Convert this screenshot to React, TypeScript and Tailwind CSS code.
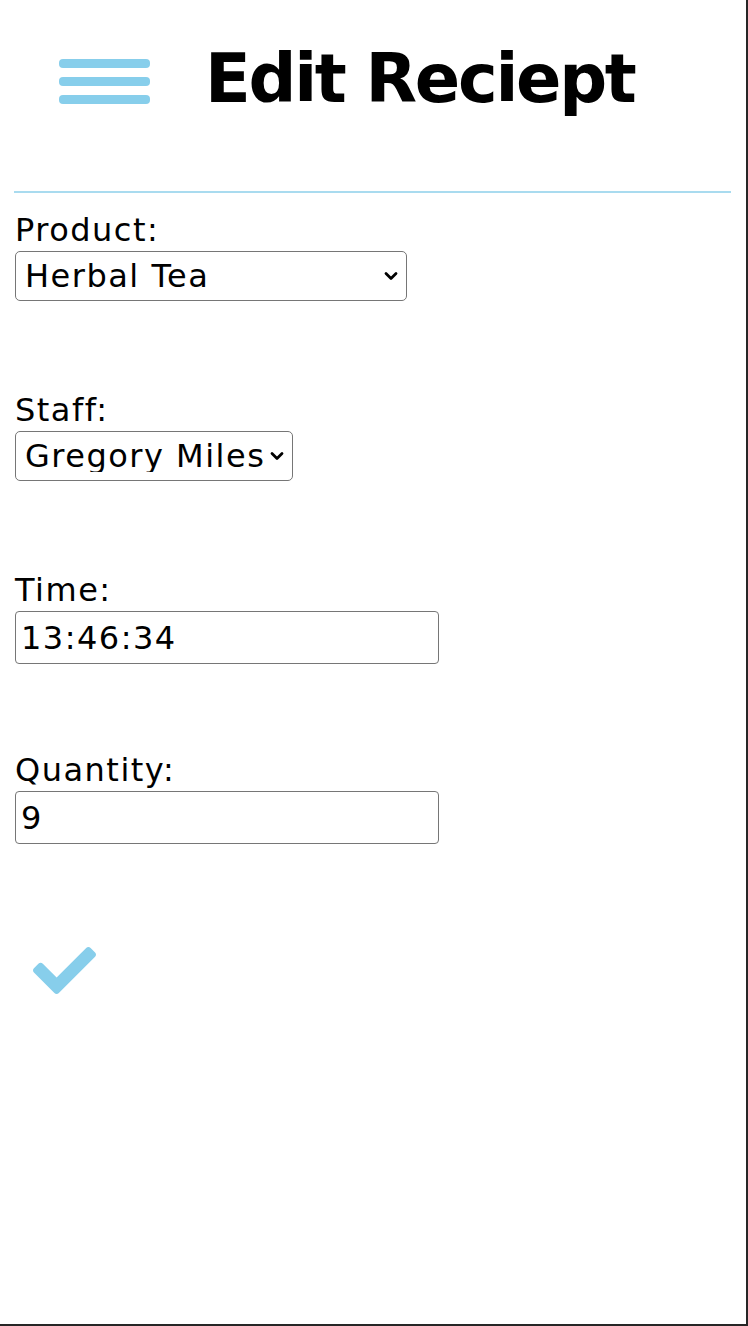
import { FaCheck } from "react-icons/fa"


type Field = {
    label: string,
    value: string,
    kind: "select" | "input",
    width: string
}


const fields: Field[] = [
    { label: "Product:", value: "Herbal Tea", kind: "select", width: "w-[392px]" },
    { label: "Staff:", value: "Gregory Miles", kind: "select", width: "w-[278px]" },
    { label: "Time:", value: "13:46:34", kind: "input", width: "w-[424px]" },
    { label: "Quantity:", value: "9", kind: "input", width: "w-[424px]" }
]


const Chevron = () => (
    <svg className="pointer-events-none absolute right-[9px] top-1/2 -translate-y-1/2" width="14" height="9" viewBox="0 0 14 9">
        <path d="M2 2 L7 7 L12 2" fill="none" stroke="#000" strokeWidth="2.8" strokeLinecap="round" strokeLinejoin="round" />
    </svg>
)


const FormField = ({ label, value, kind, width }: Field) => {
    return (
        <div className="h-[180px]">
            <label className="block h-[40px] text-[32px] leading-[40px] tracking-[1.5px]">{label}</label>
            {kind === "select" ? (
                <div className={`relative mt-[1px] ${width}`}>
                    <select
                        defaultValue={value}
                        className="block h-[50px] w-full appearance-none rounded-[5px] border border-[#767676] bg-white pl-[9px] text-[32px] leading-none tracking-[1.5px] text-black"
                    >
                        <option>{value}</option>
                    </select>
                    <Chevron />
                </div>
            ) : (
                <input
                    defaultValue={value}
                    className={`mt-[1px] block h-[53px] ${width} rounded-[4px] border border-[#767676] bg-white pl-[5px] text-[32px] leading-none tracking-[1.5px] text-black outline-none`}
                />
            )}
        </div>
    )
}


export default function App() {
    return (
        <div className="h-[1326px] w-[748px] overflow-hidden border-r-2 border-b-2 border-[#262626] bg-white font-['DejaVu_Sans',sans-serif] text-black">
            <header className="flex h-[191px] items-start">
                <div className="ml-[59px] mt-[59px] flex w-[91px] flex-col gap-[9px]">
                    <div className="h-[9px] rounded-[4px] bg-[#87ceeb]" />
                    <div className="h-[9px] rounded-[4px] bg-[#87ceeb]" />
                    <div className="h-[9px] rounded-[4px] bg-[#87ceeb]" />
                </div>
                <h1 className="ml-[55px] mt-[46px] text-[67px] font-bold leading-none tracking-[-2.3px]">Edit Reciept</h1>
            </header>
            <div className="ml-[14px] h-[2px] w-[717px] bg-[#a9dbef]" />
            <form className="mt-[17px] px-[15px]">
                {fields.map((field, index) => (
                    <FormField {...field} key={index} />
                ))}
                <button type="button" className="ml-[18px] mt-[9px] block text-[#87ceeb]">
                    <FaCheck size={63} />
                </button>
            </form>
        </div>
    )
}
